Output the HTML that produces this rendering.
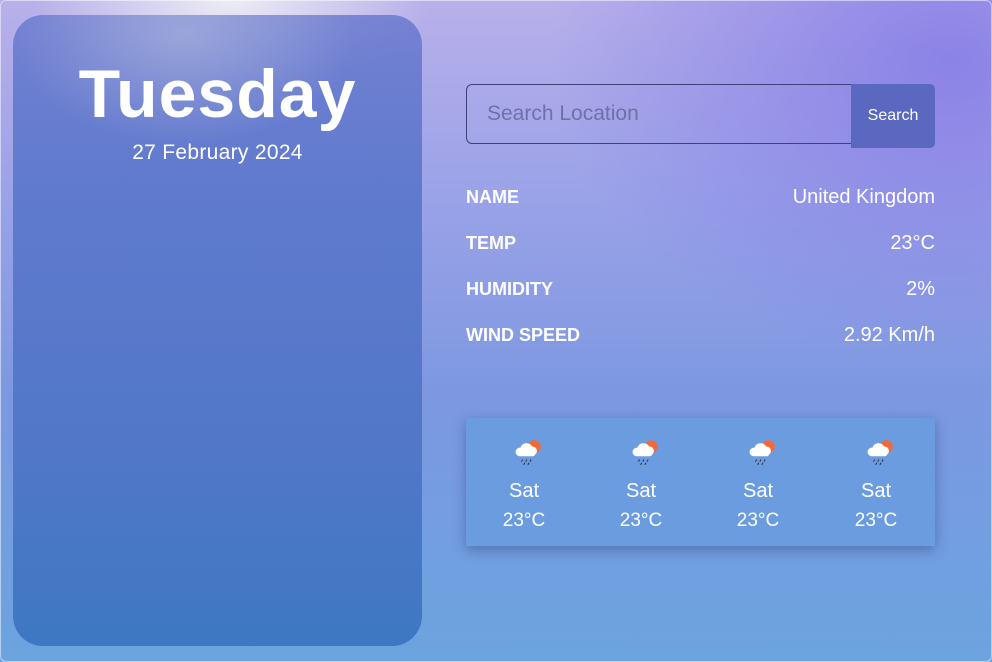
<!DOCTYPE html>
<html><head><style>
html,body{margin:0;padding:0}
body{width:992px;height:662px;overflow:hidden;position:relative;font-family:"Liberation Sans",sans-serif;color:#fff;
background:
radial-gradient(ellipse 200px 90px at 230px 0px,rgba(240,240,245,0.95),rgba(240,240,245,0) 100%),
radial-gradient(ellipse 400px 300px at 950px 60px,rgba(130,120,230,0.8),rgba(130,120,230,0) 100%),
linear-gradient(180deg,#b8b0ea 0%,#9aa2e8 30%,#7c98e0 60%,#6ba4df 100%);}
.frame{position:absolute;inset:0;border:1px solid rgba(255,255,255,0.5);border-radius:6px}
.left{position:absolute;left:13px;top:15px;width:409px;height:631px;border-radius:30px;
background:linear-gradient(180deg,rgba(100,118,205,0.8) 0%,#5f7acd 30%,#5177c8 70%,#3d78c2 100%);}
.left::before{content:"";position:absolute;inset:0;border-radius:30px;background:radial-gradient(ellipse 170px 110px at 170px 20px,rgba(190,195,225,0.5),rgba(190,195,225,0))}
.day{position:absolute;left:0;width:409px;top:40px;text-align:center;font-size:68px;font-weight:bold;letter-spacing:1px}
.date{position:absolute;left:0;width:409px;top:126px;text-align:center;font-size:21px;letter-spacing:0.3px}
.search{position:absolute;left:466px;top:84px;width:384px;height:58px;border:1px solid #3b4478;border-radius:6px 0 0 6px;}
.search span{position:absolute;left:20px;top:17px;font-size:21px;color:#6c72a8}
.btn{position:absolute;left:851px;top:84px;width:84px;height:64px;background:#5b68c0;border-radius:0 5px 5px 0;font-size:16px;text-align:center;line-height:64px}
.row{position:absolute;left:466px;width:469px;font-size:20px}
.row b{font-size:18px}
.row span{float:right}
.fc{position:absolute;left:466px;top:418px;width:469px;height:128px;background:#6c9ce0;box-shadow:0 4px 12px rgba(40,60,120,0.45)}
.it{position:absolute;top:0;width:80px;text-align:center}
.it svg{position:absolute;left:30px;top:20px}
.it .d{position:absolute;top:62px;width:80px;font-size:20px}
.it .t{position:absolute;top:92px;width:80px;font-size:19px}
</style></head><body>
<div class="frame"></div>
<div class="left"><div class="day">Tuesday</div><div class="date">27 February 2024</div></div>
<div class="search"><span>Search Location</span></div>
<div class="btn">Search</div>
<div class="row" style="top:186px"><b>NAME</b><span>United Kingdom</span></div>
<div class="row" style="top:232px"><b>TEMP</b><span>23°C</span></div>
<div class="row" style="top:278px"><b>HUMIDITY</b><span>2%</span></div>
<div class="row" style="top:324px"><b>WIND SPEED</b><span>2.92 Km/h</span></div>
<div class="fc">
<div class="it" style="left:18px"><svg width="30" height="28" viewBox="0 0 28 26"><circle cx="19" cy="8" r="6" fill="#f26a3a"/><path d="M5 17a4 4 0 0 1 1-8 6 6 0 0 1 11-1 4 4 0 0 1 3 7 3 3 0 0 1-2 2z" fill="#fff"/><path d="M8 20l-1 2M12 20l-1 2M16 20l-1 2M10 23l-1 2M14 23l-1 2" stroke="#334" stroke-width="1"/></svg><div class="d">Sat</div><div class="t">23°C</div></div>
<div class="it" style="left:135px"><svg width="30" height="28" viewBox="0 0 28 26"><circle cx="19" cy="8" r="6" fill="#f26a3a"/><path d="M5 17a4 4 0 0 1 1-8 6 6 0 0 1 11-1 4 4 0 0 1 3 7 3 3 0 0 1-2 2z" fill="#fff"/><path d="M8 20l-1 2M12 20l-1 2M16 20l-1 2M10 23l-1 2M14 23l-1 2" stroke="#334" stroke-width="1"/></svg><div class="d">Sat</div><div class="t">23°C</div></div>
<div class="it" style="left:252px"><svg width="30" height="28" viewBox="0 0 28 26"><circle cx="19" cy="8" r="6" fill="#f26a3a"/><path d="M5 17a4 4 0 0 1 1-8 6 6 0 0 1 11-1 4 4 0 0 1 3 7 3 3 0 0 1-2 2z" fill="#fff"/><path d="M8 20l-1 2M12 20l-1 2M16 20l-1 2M10 23l-1 2M14 23l-1 2" stroke="#334" stroke-width="1"/></svg><div class="d">Sat</div><div class="t">23°C</div></div>
<div class="it" style="left:370px"><svg width="30" height="28" viewBox="0 0 28 26"><circle cx="19" cy="8" r="6" fill="#f26a3a"/><path d="M5 17a4 4 0 0 1 1-8 6 6 0 0 1 11-1 4 4 0 0 1 3 7 3 3 0 0 1-2 2z" fill="#fff"/><path d="M8 20l-1 2M12 20l-1 2M16 20l-1 2M10 23l-1 2M14 23l-1 2" stroke="#334" stroke-width="1"/></svg><div class="d">Sat</div><div class="t">23°C</div></div>
</div>
</body></html>
